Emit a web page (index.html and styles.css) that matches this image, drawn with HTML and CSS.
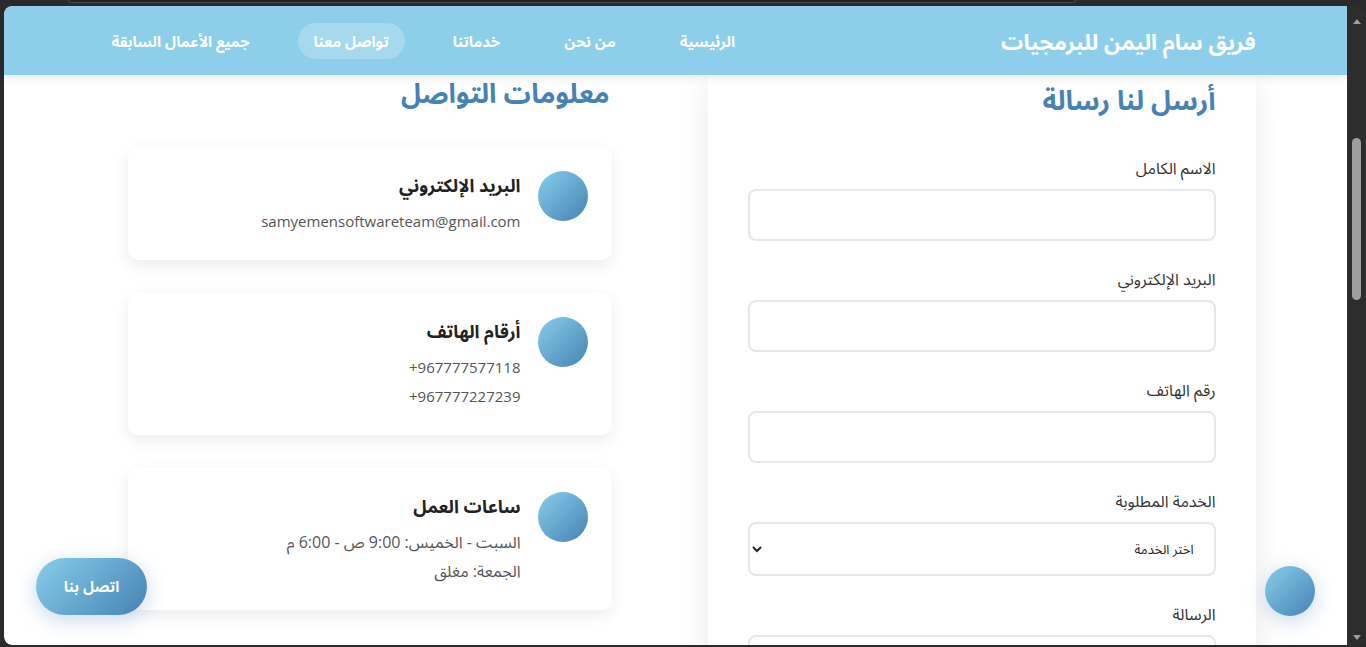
FILE: index.html
```html
<!DOCTYPE html>
<html lang="ar">
<head>
<meta charset="utf-8">
<title>تواصل معنا</title>
<link rel="stylesheet" href="styles.css">
</head>
<body>
<div class="chrome"><div class="urlbar"></div></div>
<div class="window">
  <div class="viewport" dir="rtl">
    <header class="site-header">
      <div class="header-inner">
        <div class="brand">فريق سام اليمن للبرمجيات</div>
        <nav class="nav">
          <a class="nav-link">الرئيسية</a>
          <a class="nav-link">من نحن</a>
          <a class="nav-link">خدماتنا</a>
          <a class="nav-link active">تواصل معنا</a>
          <a class="nav-link">جميع الأعمال السابقة</a>
        </nav>
      </div>
    </header>
    <main class="contact">
      <div class="contact-grid">
        <section class="form-card">
          <h2 class="section-title">أرسل لنا رسالة</h2>
          <div class="form-group">
            <label class="form-label">الاسم الكامل</label>
            <input class="form-control" type="text">
          </div>
          <div class="form-group">
            <label class="form-label">البريد الإلكتروني</label>
            <input class="form-control" type="email">
          </div>
          <div class="form-group">
            <label class="form-label">رقم الهاتف</label>
            <input class="form-control" type="tel">
          </div>
          <div class="form-group">
            <label class="form-label">الخدمة المطلوبة</label>
            <select class="form-control form-select">
              <option>اختر الخدمة</option>
            </select>
          </div>
          <div class="form-group">
            <label class="form-label">الرسالة</label>
            <textarea class="form-control form-textarea"></textarea>
          </div>
        </section>
        <section class="info">
          <h2 class="section-title info-title">معلومات التواصل</h2>
          <div class="info-card">
            <span class="info-icon"></span>
            <div class="info-body">
              <h3 class="info-heading">البريد الإلكتروني</h3>
              <p class="info-line">samyemensoftwareteam@gmail.com</p>
            </div>
          </div>
          <div class="info-card">
            <span class="info-icon"></span>
            <div class="info-body">
              <h3 class="info-heading">أرقام الهاتف</h3>
              <p class="info-line" dir="ltr">+967777577118</p>
              <p class="info-line" dir="ltr">+967777227239</p>
            </div>
          </div>
          <div class="info-card">
            <span class="info-icon"></span>
            <div class="info-body">
              <h3 class="info-heading">ساعات العمل</h3>
              <p class="info-line info-ar">السبت - الخميس: 9:00 ص - 6:00 م</p>
              <p class="info-line info-ar">الجمعة: مغلق</p>
            </div>
          </div>
        </section>
      </div>
    </main>
    <a class="fab-contact">اتصل بنا</a>
    <span class="fab-circle"></span>
  </div>
  <div class="scrollbar">
    <span class="sb-arrow sb-up"></span>
    <span class="sb-thumb"></span>
    <span class="sb-arrow sb-down"></span>
  </div>
</div>
</body>
</html>
```
FILE: styles.css
```css
* { box-sizing: border-box; }

html, body {
  margin: 0;
  height: 647px;
  overflow: hidden;
}

body {
  background: #2a2a2a;
  font-family: "Open Sans", "Noto Sans Arabic", "Noto Naskh Arabic", "DejaVu Sans", sans-serif;
}

.chrome {
  height: 6px;
  position: relative;
}

.urlbar {
  margin-left: 68px;
  width: 1008px;
  height: 3px;
  border: 1px solid #4a4a4a;
  border-top: none;
  border-radius: 0 0 6px 6px;
  background: #222;
}

.window {
  margin-left: 4px;
  width: 1362px;
  height: 639px;
  display: flex;
  border-radius: 8px 10px 8px 8px;
  overflow: hidden;
  background: #2d2d2d;
}

.viewport {
  position: relative;
  width: 1343px;
  height: 100%;
  overflow: hidden;
  background: #fff;
  border-radius: 8px 0 0 8px;
}

/* Header */
.site-header {
  position: relative;
  z-index: 3;
  height: 69px;
  background: #8dcfea;
  box-shadow: 0 2px 10px rgba(0, 0, 0, 0.1);
}

.header-inner {
  max-width: 1200px;
  height: 100%;
  margin: 0 auto;
  padding: 0 20px;
  display: flex;
  align-items: center;
  justify-content: space-between;
}

.brand {
  color: #fff;
  font-size: 22px;
  font-weight: 700;
  line-height: 1;
}

.nav {
  display: flex;
  gap: 32px;
  align-items: center;
}

.nav-link {
  color: #fff;
  font-size: 15px;
  font-weight: 700;
  line-height: 20px;
  padding: 8px 16px;
  border-radius: 25px;
}

.nav-link.active {
  background: rgba(255, 255, 255, 0.22);
}

/* Content */
.contact-grid {
  max-width: 1200px;
  margin: 0 auto;
  padding: 0 20px;
  display: grid;
  grid-template-columns: 1fr 1fr;
  gap: 64px;
  align-items: start;
}

.section-title {
  margin: 0;
  color: #4682b4;
  font-size: 27px;
  font-weight: 700;
  line-height: 36px;
}

.form-card {
  background: #fff;
  padding: 7px 40px 40px;
  box-shadow: 0 10px 30px rgba(0, 0, 0, 0.09);
  border-radius: 0 0 15px 15px;
}

.form-card .section-title {
  margin-bottom: 39px;
}

.form-group {
  margin-bottom: 27px;
}

.form-label {
  display: block;
  color: #333;
  font-size: 16px;
  line-height: 22px;
  margin-bottom: 10px;
}

.form-control {
  display: block;
  width: 100%;
  height: 52px;
  border: 2px solid #e4e8ec;
  border-radius: 8px;
  background: #fff;
  font-family: inherit;
  font-size: 13px;
  padding: 0 20px;
}

.form-select {
  height: 54px;
  color: #222;
  padding-right: 16px;
}

.form-textarea {
  height: 120px;
  resize: none;
}

.info {
  padding: 0 32px;
}

.info-title {
  margin-bottom: 36px;
  padding-right: 2px;
}

.info-card {
  display: flex;
  align-items: flex-start;
  gap: 17px;
  padding: 24px;
  margin-bottom: 33px;
  background: #fff;
  border-radius: 10px;
  box-shadow: 0 5px 15px rgba(0, 0, 0, 0.08);
}

.info-icon {
  flex: none;
  width: 50px;
  height: 50px;
  border-radius: 50%;
  background: linear-gradient(135deg, #87ceeb, #4682b4);
}

.info-heading {
  margin: 0 0 8px;
  color: #222;
  font-size: 18px;
  font-weight: 700;
  line-height: 28px;
}

.info-line {
  margin: 0;
  color: #555;
  font-size: 15px;
  line-height: 29px;
  text-align: right;
}

.info-ar {
  font-size: 16px;
}

/* Floating buttons */
.fab-contact {
  position: absolute;
  left: 32px;
  bottom: 30px;
  z-index: 4;
  width: 111px;
  height: 57px;
  display: flex;
  align-items: center;
  justify-content: center;
  color: #fff;
  font-size: 15px;
  font-weight: 700;
  border-radius: 30px;
  background: linear-gradient(135deg, #87ceeb, #4682b4);
  box-shadow: 0 5px 20px rgba(70, 130, 180, 0.3);
}

.fab-circle {
  position: absolute;
  right: 32px;
  bottom: 29px;
  z-index: 4;
  width: 50px;
  height: 50px;
  border-radius: 50%;
  background: linear-gradient(135deg, #87ceeb, #4682b4);
  box-shadow: 0 5px 20px rgba(70, 130, 180, 0.3);
}

/* Scrollbar */
.scrollbar {
  flex: 1;
  position: relative;
  background: #2d2d2d;
  display: flex;
  flex-direction: column;
  align-items: center;
  padding-top: 13px;
}

.sb-arrow {
  width: 0;
  height: 0;
  border-left: 4px solid transparent;
  border-right: 4px solid transparent;
}

.sb-up {
  border-bottom: 5px solid #9d9d9d;
}

.sb-thumb {
  margin-top: 114px;
  width: 9px;
  height: 162px;
  border-radius: 5px;
  background: #9e9e9e;
}

.sb-down {
  margin-top: auto;
  margin-bottom: 5px;
  border-top: 5px solid #9d9d9d;
}
```
